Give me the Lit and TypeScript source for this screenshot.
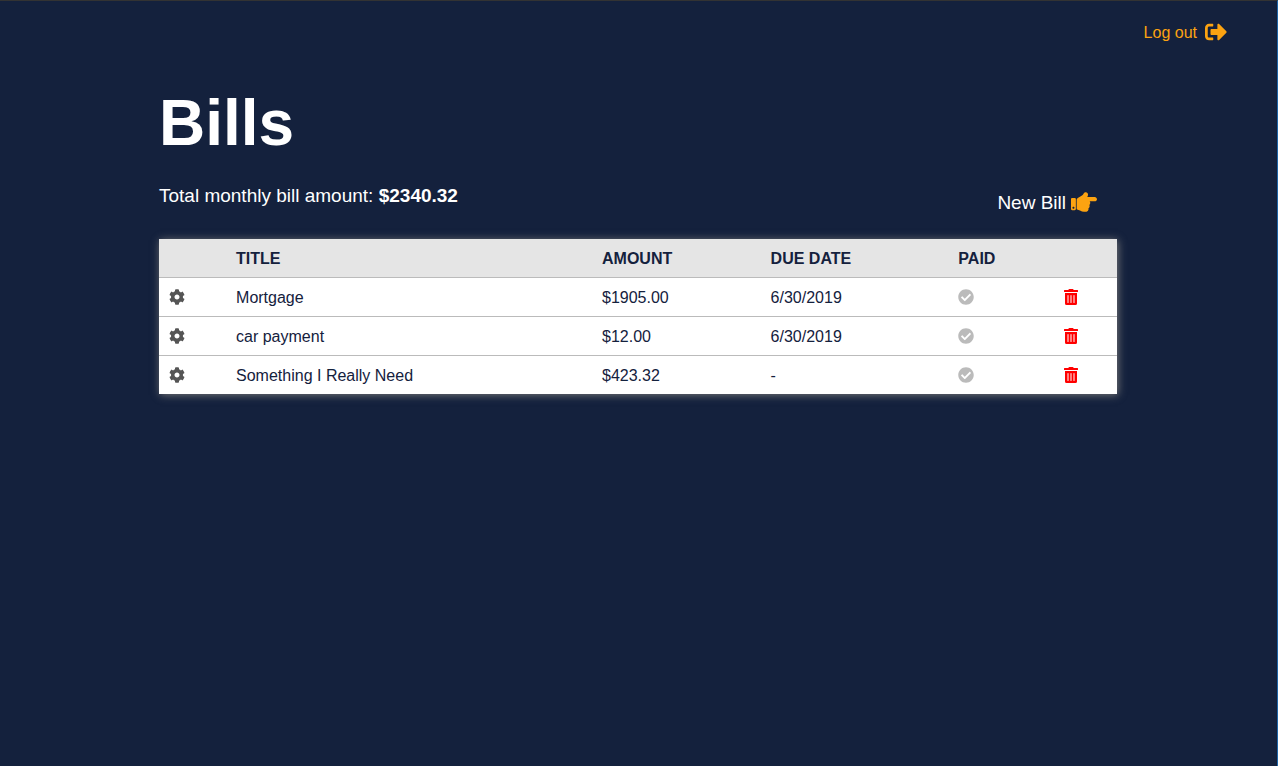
import { LitElement, css, html, svg } from "lit";
import { customElement, property, state } from "lit/decorators.js";

interface Bill {
  id: number;
  title: string;
  amount: number;
  dueDate: string;
  paid: boolean;
}

const ICONS: Record<string, { box: string; path: string }> = {
  cog: {
    box: "0 0 512 512",
    path: "M487.4 315.7l-42.6-24.6c4.3-23.2 4.3-47 0-70.2l42.6-24.6c4.9-2.8 7.1-8.6 5.5-14-11.1-35.6-30-67.8-54.7-94.6-3.8-4.1-10-5.1-14.8-2.3L380.8 110c-17.9-15.4-38.5-27.3-60.8-35.1V25.8c0-5.6-3.9-10.5-9.4-11.7-36.7-8.2-74.3-7.8-109.2 0-5.5 1.2-9.4 6.1-9.4 11.7V75c-22.2 7.9-42.8 19.8-60.8 35.1L88.7 85.5c-4.9-2.8-11-1.9-14.8 2.3-24.7 26.7-43.6 58.9-54.7 94.6-1.7 5.4.6 11.2 5.5 14L67.3 221c-4.3 23.2-4.3 47 0 70.2l-42.6 24.6c-4.9 2.8-7.1 8.6-5.5 14 11.1 35.6 30 67.8 54.7 94.6 3.8 4.1 10 5.1 14.8 2.3l42.6-24.6c17.9 15.4 38.5 27.3 60.8 35.1v49.2c0 5.6 3.9 10.5 9.4 11.7 36.7 8.2 74.3 7.8 109.2 0 5.5-1.2 9.4-6.1 9.4-11.7v-49.2c22.2-7.9 42.8-19.8 60.8-35.1l42.6 24.6c4.9 2.8 11 1.9 14.8-2.3 24.7-26.7 43.6-58.9 54.7-94.6 1.5-5.5-.7-11.3-5.6-14.1zM256 336c-44.1 0-80-35.9-80-80s35.9-80 80-80 80 35.9 80 80-35.9 80-80 80z",
  },
  check: {
    box: "0 0 512 512",
    path: "M504 256c0 136.967-111.033 248-248 248S8 392.967 8 256 119.033 8 256 8s248 111.033 248 248zM227.314 387.314l184-184c6.248-6.248 6.248-16.379 0-22.627l-22.627-22.627c-6.248-6.249-16.379-6.249-22.628 0L216 308.118l-70.059-70.059c-6.248-6.248-16.379-6.248-22.628 0l-22.627 22.627c-6.248 6.248-6.248 16.379 0 22.627l104 104c6.249 6.249 16.379 6.249 22.628.001z",
  },
  trash: {
    box: "0 0 448 512",
    path: "M32 464a48 48 0 0 0 48 48h288a48 48 0 0 0 48-48V128H32zm272-256a16 16 0 0 1 32 0v224a16 16 0 0 1-32 0zm-96 0a16 16 0 0 1 32 0v224a16 16 0 0 1-32 0zm-96 0a16 16 0 0 1 32 0v224a16 16 0 0 1-32 0zM432 32H312l-9.4-18.7A24 24 0 0 0 281.1 0H166.8a23.72 23.72 0 0 0-21.4 13.3L136 32H16A16 16 0 0 0 0 48v32a16 16 0 0 0 16 16h416a16 16 0 0 0 16-16V48a16 16 0 0 0-16-16z",
  },
  exit: {
    box: "0 0 512 512",
    path: "M497 273L329 441c-15 15-41 4.5-41-17v-96H152c-13.3 0-24-10.7-24-24v-96c0-13.3 10.7-24 24-24h136V88c0-21.4 25.9-32 41-17l168 168c9.3 9.4 9.3 24.6 0 34zM192 436v-40c0-6.6-5.4-12-12-12H96c-17.7 0-32-14.3-32-32V160c0-17.7 14.3-32 32-32h84c6.6 0 12-5.4 12-12V76c0-6.6-5.4-12-12-12H96c-53 0-96 43-96 96v192c0 53 43 96 96 96h84c6.6 0 12-5.4 12-12z",
  },
  hand: {
    box: "0 0 512 512",
    path: "M512 199.652c0 23.625-20.65 43.826-44.8 43.826h-99.851c16.34 17.048 18.346 49.766-6.299 70.944 14.288 22.829 2.147 53.017-16.45 62.315C353.574 425.878 322.654 448 272 448c-2.746 0-13.276-.203-16-.195-61.971.168-76.894-31.065-123.731-38.315C120.596 407.683 112 397.599 112 385.786V214.261l.002-.001c.011-18.366 10.607-35.889 28.464-43.845 28.886-12.994 95.413-49.038 107.534-77.323 7.797-18.194 21.384-29.084 40-29.092 34.222-.014 57.752 35.098 44.119 66.908-3.583 8.359-8.312 16.67-14.153 24.918H467.2c23.45 0 44.8 20.543 44.8 43.826zM96 200v192c0 13.255-10.745 24-24 24H24c-13.255 0-24-10.745-24-24V200c0-13.255 10.745-24 24-24h48c13.255 0 24 10.745 24 24zM68 368c0-11.046-8.954-20-20-20s-20 8.954-20 20 8.954 20 20 20 20-8.954 20-20z",
  },
};

const icon = (name: string) => html`
  <svg class="icon" viewBox=${ICONS[name].box} aria-hidden="true">
    ${svg`<path fill="currentColor" d=${ICONS[name].path}></path>`}
  </svg>
`;

@customElement("bill-table")
class BillTable extends LitElement {
  @property({ attribute: false }) bills: Bill[] = [];

  static styles = css`
    :host {
      display: block;
      box-shadow: 1px 1px 8px #777;
    }
    .table {
      width: 100%;
      table-layout: fixed;
      border-collapse: collapse;
      background: #fff;
      color: #14213d;
      font-size: 16px;
      line-height: 18px;
    }
    .settings { width: 7%; }
    .title { width: 38.2%; }
    .amount { width: 17.6%; }
    .due { width: 19.6%; }
    .paid { width: 11%; }
    .head {
      background: #e5e5e5;
      text-transform: uppercase;
    }
    .cell {
      box-sizing: border-box;
      padding: 11px 10px 9px;
      text-align: left;
      vertical-align: middle;
    }
    .control {
      padding: 10px;
    }
    .body .cell {
      border-top: 1px solid #bbb;
    }
    .action {
      display: block;
      padding: 0;
      border: 0;
      background: none;
      cursor: pointer;
    }
    .icon {
      display: block;
      height: 16px;
    }
    .cog { color: #555; }
    .check { color: #bbb; }
    .check.done { color: #2a9d4a; }
    .trash { color: #f00; }
  `;

  private emit(type: string, id: number) {
    this.dispatchEvent(new CustomEvent(type, { detail: id }));
  }

  render() {
    return html`
      <table class="table">
        <thead>
          <tr class="head">
            <th class="cell settings" scope="col"></th>
            <th class="cell title" scope="col">Title</th>
            <th class="cell amount" scope="col">Amount</th>
            <th class="cell due" scope="col">Due date</th>
            <th class="cell paid" scope="col">Paid</th>
            <th class="cell" scope="col"></th>
          </tr>
        </thead>
        <tbody class="body">
          ${this.bills.map(
            (bill) => html`
              <tr>
                <td class="cell control">
                  <button class="action cog" aria-label="Edit ${bill.title}">${icon("cog")}</button>
                </td>
                <td class="cell">${bill.title}</td>
                <td class="cell">$${bill.amount.toFixed(2)}</td>
                <td class="cell">${bill.dueDate || "-"}</td>
                <td class="cell control">
                  <button
                    class="action check ${bill.paid ? "done" : ""}"
                    aria-label="Mark ${bill.title} paid"
                    aria-pressed=${bill.paid ? "true" : "false"}
                    @click=${() => this.emit("toggle-paid", bill.id)}
                  >${icon("check")}</button>
                </td>
                <td class="cell control">
                  <button
                    class="action trash"
                    aria-label="Delete ${bill.title}"
                    @click=${() => this.emit("remove-bill", bill.id)}
                  >${icon("trash")}</button>
                </td>
              </tr>
            `
          )}
        </tbody>
      </table>
    `;
  }
}

@customElement("app-root")
class AppRoot extends LitElement {
  @state() private bills: Bill[] = [
    { id: 1, title: "Mortgage", amount: 1905, dueDate: "6/30/2019", paid: false },
    { id: 2, title: "car payment", amount: 12, dueDate: "6/30/2019", paid: false },
    { id: 3, title: "Something I Really Need", amount: 423.32, dueDate: "", paid: false },
  ];

  static styles = css`
    :host {
      display: block;
      box-sizing: border-box;
      min-height: 100vh;
      border-top: 1px solid #333;
      border-right: 1px solid #1d65a8;
      background: #14213d;
      color: #fff;
      font-family: "Liberation Sans", Arial, sans-serif;
    }
    .topbar {
      display: flex;
      justify-content: flex-end;
      padding: 20px 50px 18px;
    }
    .logout {
      display: flex;
      align-items: flex-start;
      gap: 8px;
      color: #fca311;
      font-size: 16px;
      line-height: 24px;
      text-decoration: none;
    }
    .logout .icon {
      width: 22px;
      height: 22px;
    }
    .main {
      margin: 0 160px 0 159px;
    }
    .heading {
      margin: 0;
      padding: 22px 0 24px;
      font-size: 64px;
      line-height: 76px;
    }
    .summary {
      display: flex;
      justify-content: space-between;
      align-items: flex-start;
      padding: 0 20px 20px 0;
      font-size: 19px;
      line-height: 22px;
    }
    .total {
      margin: 0;
    }
    .new {
      display: flex;
      align-items: flex-start;
      gap: 5px;
      padding: 4px 0 2px;
      border: 0;
      background: none;
      color: inherit;
      font: inherit;
      line-height: 28px;
      cursor: pointer;
    }
    .new .icon {
      width: 26px;
      height: 26px;
      color: #fca311;
    }
    .icon {
      display: block;
    }
  `;

  private toggle(id: number) {
    this.bills = this.bills.map((b) => (b.id === id ? { ...b, paid: !b.paid } : b));
  }

  private remove(id: number) {
    this.bills = this.bills.filter((b) => b.id !== id);
  }

  render() {
    const total = this.bills.reduce((sum, b) => sum + b.amount, 0);
    return html`
      <header class="topbar">
        <a class="logout" href="#logout">Log out ${icon("exit")}</a>
      </header>
      <main class="main">
        <h1 class="heading">Bills</h1>
        <div class="summary">
          <p class="total">Total monthly bill amount: <strong>$${total.toFixed(2)}</strong></p>
          <button class="new">New Bill ${icon("hand")}</button>
        </div>
        <bill-table
          .bills=${this.bills}
          @toggle-paid=${(e: CustomEvent<number>) => this.toggle(e.detail)}
          @remove-bill=${(e: CustomEvent<number>) => this.remove(e.detail)}
        ></bill-table>
      </main>
    `;
  }
}
